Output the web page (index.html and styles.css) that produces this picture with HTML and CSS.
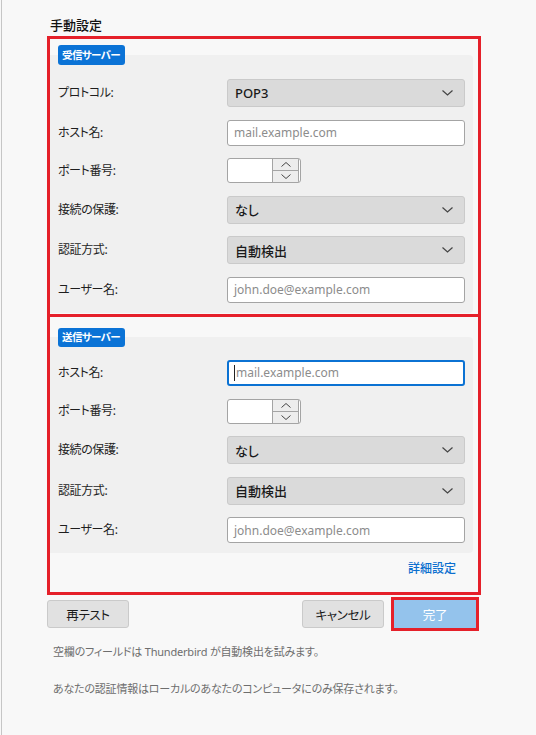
FILE: index.html
```
<!DOCTYPE html>
<html lang="ja">
<head>
<meta charset="utf-8">
<title>手動設定</title>
<link rel="stylesheet" href="styles.css">
</head>
<body>
<div class="page">
  <div class="title">手動設定</div>

  <section class="box box-in">
    <div class="panel">
      <div class="legend">受信サーバー</div>
      <div class="rows">
        <div class="label">プロトコル:</div>
        <div class="select"><span>POP3</span><svg class="chev" width="11" height="6" viewBox="0 0 11 6"><polyline points="0.5,0.5 5.5,5 10.5,0.5" fill="none" stroke="#444" stroke-width="1.2"/></svg></div>

        <div class="label">ホスト名:</div>
        <div class="field"><span class="ph">mail.example.com</span></div>

        <div class="label">ポート番号:</div>
        <div class="spin">
          <div class="spin-val"></div>
          <div class="spin-btns">
            <div class="spin-btn"><svg width="10" height="5" viewBox="0 0 10 5"><polyline points="0.5,4.5 5,0.5 9.5,4.5" fill="none" stroke="#444" stroke-width="1"/></svg></div>
            <div class="spin-btn"><svg width="10" height="5" viewBox="0 0 10 5"><polyline points="0.5,0.5 5,4.5 9.5,0.5" fill="none" stroke="#444" stroke-width="1"/></svg></div>
          </div>
        </div>

        <div class="label">接続の保護:</div>
        <div class="select"><span>なし</span><svg class="chev" width="11" height="6" viewBox="0 0 11 6"><polyline points="0.5,0.5 5.5,5 10.5,0.5" fill="none" stroke="#444" stroke-width="1.2"/></svg></div>

        <div class="label">認証方式:</div>
        <div class="select"><span>自動検出</span><svg class="chev" width="11" height="6" viewBox="0 0 11 6"><polyline points="0.5,0.5 5.5,5 10.5,0.5" fill="none" stroke="#444" stroke-width="1.2"/></svg></div>

        <div class="label">ユーザー名:</div>
        <div class="field"><span class="ph">john.doe@example.com</span></div>
      </div>
    </div>
  </section>

  <section class="box box-out">
    <div class="panel">
      <div class="legend">送信サーバー</div>
      <div class="rows">
        <div class="label">ホスト名:</div>
        <div class="field focused"><span class="caret"></span><span class="ph">mail.example.com</span></div>

        <div class="label">ポート番号:</div>
        <div class="spin">
          <div class="spin-val"></div>
          <div class="spin-btns">
            <div class="spin-btn"><svg width="10" height="5" viewBox="0 0 10 5"><polyline points="0.5,4.5 5,0.5 9.5,4.5" fill="none" stroke="#444" stroke-width="1"/></svg></div>
            <div class="spin-btn"><svg width="10" height="5" viewBox="0 0 10 5"><polyline points="0.5,0.5 5,4.5 9.5,0.5" fill="none" stroke="#444" stroke-width="1"/></svg></div>
          </div>
        </div>

        <div class="label">接続の保護:</div>
        <div class="select"><span>なし</span><svg class="chev" width="11" height="6" viewBox="0 0 11 6"><polyline points="0.5,0.5 5.5,5 10.5,0.5" fill="none" stroke="#444" stroke-width="1.2"/></svg></div>

        <div class="label">認証方式:</div>
        <div class="select"><span>自動検出</span><svg class="chev" width="11" height="6" viewBox="0 0 11 6"><polyline points="0.5,0.5 5.5,5 10.5,0.5" fill="none" stroke="#444" stroke-width="1.2"/></svg></div>

        <div class="label">ユーザー名:</div>
        <div class="field"><span class="ph">john.doe@example.com</span></div>
      </div>
    </div>
    <div class="more"><a class="link">詳細設定</a></div>
  </section>

  <div class="actions">
    <button class="btn">再テスト</button>
    <button class="btn btn-cancel">キャンセル</button>
    <button class="btn btn-done">完了</button>
  </div>

  <p class="note note-first">空欄のフィールドは Thunderbird が自動検出を試みます。</p>
  <p class="note">あなたの認証情報はローカルのあなたのコンピュータにのみ保存されます。</p>
</div>
</body>
</html>
```

FILE: styles.css
```
* { box-sizing: border-box; }

html, body {
  margin: 0;
  background: #f8f8f8;
}

body {
  font-family: "Noto Sans", "Noto Sans CJK JP", sans-serif;
  font-feature-settings: "palt";
  color: #1c1c1c;
}

.page {
  margin-left: 1px;
  border-left: 1px solid #c6c6c6;
  min-height: 735px;
  width: 535px;
  padding: 16px 0 0 45px;
}

.title {
  margin: 0 0 2px 3px;
  font-size: 13px;
  font-weight: 500;
  line-height: 18px;
  color: #111;
}

.box {
  width: 434px;
  border: 3px solid #e5202a;
  padding: 6px 5px 1px 0;
}

.box-out {
  border-top: none;
  padding-top: 11px;
  padding-bottom: 0;
}

.panel {
  margin-top: 10px;
  background: #f0f0f0;
  border-radius: 0 4px 4px 0;
  padding: 0 8px 10px 8px;
  display: flex;
  flex-direction: column;
}

.box-out .panel {
  margin-top: 9px;
}

.legend {
  align-self: flex-start;
  margin-top: -10px;
  background: #0b73d6;
  color: #fff;
  font-size: 10.5px;
  font-weight: 700;
  letter-spacing: -0.6px;
  line-height: 20px;
  padding: 0 5px 0 4px;
  border-radius: 3px;
}

.box-out .legend {
  margin-top: -9px;
  line-height: 19px;
}

.rows {
  margin-top: 14px;
  display: grid;
  grid-template-columns: 169px 238px;
  row-gap: 12.6px;
  align-items: center;
}

.box-out .rows {
  margin-top: 13px;
}

.label {
  font-size: 12px;
  letter-spacing: -0.4px;
  line-height: 18px;
  color: #1e1e1e;
}

.select {
  height: 28px;
  background: #dadada;
  border: 1px solid #cacaca;
  border-radius: 3px;
  padding: 0 11px 0 7px;
  display: flex;
  align-items: center;
  justify-content: space-between;
  font-size: 13px;
  font-weight: 500;
  color: #1a1a1a;
}

.chev { display: block; }

.field {
  height: 26px;
  background: #fff;
  border: 1px solid #a4a4a4;
  border-radius: 3px;
  padding-left: 6px;
  display: flex;
  align-items: center;
  font-size: 12px;
}

.field.focused {
  border: 2px solid #0b72d3;
  padding-left: 5px;
}

.ph { color: #8c8c8c; }

.caret {
  width: 1px;
  height: 16px;
  background: #222;
  margin-right: 1px;
}

.spin {
  width: 74px;
  height: 25px;
  border: 1px solid #a4a4a4;
  border-radius: 3px;
  background: #fff;
  display: flex;
  overflow: hidden;
}

.spin-val { flex: 0 0 44px; }

.spin-btns {
  flex: 0 0 27px;
  display: flex;
  flex-direction: column;
  border-left: 1px solid #a4a4a4;
  border-right: 1px solid #a4a4a4;
}

.spin-btn {
  flex: 1;
  display: flex;
  align-items: center;
  justify-content: center;
  background: #ededed;
}

.spin-btn + .spin-btn { border-top: 1px solid #a4a4a4; }

.spin-btn svg { display: block; }

.more {
  display: flex;
  justify-content: flex-end;
  padding: 8px 17px 15px 0;
}

.link {
  font-size: 12px;
  line-height: 16px;
  color: #0b6fcf;
  font-weight: 500;
}

.actions {
  display: flex;
  width: 429px;
  margin-top: 5px;
  gap: 10px;
}

.btn {
  width: 82px;
  height: 28px;
  padding: 0;
  margin: 0;
  background: #e1e1e1;
  border: 1px solid #cacaca;
  border-radius: 3px;
  font-family: inherit;
  font-feature-settings: "palt";
  font-size: 12.5px;
  letter-spacing: -0.3px;
  color: #1a1a1a;
}

.btn-cancel { margin-left: auto; }

.btn-done {
  background: #94c3ec;
  border-color: #94c3ec;
  border-radius: 0;
  color: #fff;
  outline: 3px solid #e5202a;
  outline-offset: 0;
}

.note {
  margin: 19px 0 0 6px;
  font-size: 11px;
  letter-spacing: -0.2px;
  line-height: 18px;
  color: #6e6e6e;
}

.note-first { margin-top: 15px; }
```
